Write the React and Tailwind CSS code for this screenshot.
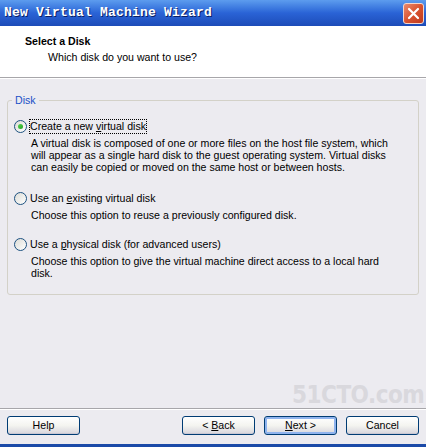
import React from "react";

const font = { fontFamily: '"Liberation Sans", Arial, sans-serif' };

const Radio = ({ checked }) => (
  <span className="relative inline-flex h-[13px] w-[13px] shrink-0 items-center justify-center rounded-full border border-[#1c5180] bg-gradient-to-br from-[#dcdcd6] to-white">
    {checked && (
      <span className="h-[5px] w-[5px] rounded-full bg-gradient-to-br from-[#55d551] to-[#21a121]" />
    )}
  </span>
);

const XpButton = ({ children, primary }) => (
  <button
    className={`flex h-[19px] w-[73px] items-center justify-center rounded-[3px] border border-[#003c74] bg-gradient-to-b from-white via-[#f4f4f0] to-[#d6d5dc] text-[10.6px] leading-none text-black ${
      primary ? "shadow-[inset_0_0_0_2px_#8fb3ee]" : "shadow-[inset_0_-1px_0_#c9c7d4]"
    }`}
  >
    <span className="whitespace-pre">{children}</span>
  </button>
);

const Option = ({ checked, focus, label, lines, className = "" }) => (
  <div className={className}>
    <div className="flex items-center gap-[3px]">
      <Radio checked={checked} />
      <span
        className={`text-[10.6px] leading-[13px] text-black ${
          focus ? "outline outline-1 outline-dotted outline-black" : ""
        }`}
      >
        {label}
      </span>
    </div>
    <div className="mt-[4px] pl-[17px] text-[10.6px] leading-[12px] text-black">
      {lines.map((l, i) => (
        <div key={i}>{l}</div>
      ))}
    </div>
  </div>
);

export default function App() {
  return (
    <div className="relative flex h-[447px] w-[426px] flex-col overflow-hidden bg-[#ecebf0]" style={font}>
      {/* title bar */}
      <div className="flex h-[26px] items-center justify-between bg-gradient-to-b from-[#5d9cee] via-[#2a63d6] to-[#1d4cb8] pl-[4px] pr-[2px]">
        <span
          className="text-[13px] font-bold tracking-[0.2px] text-white [text-shadow:1px_1px_0_#0a1f66]"
          style={{ fontFamily: '"Liberation Mono", "Courier New", monospace' }}
        >
          New Virtual Machine Wizard
        </span>
        <span className="flex h-[21px] w-[21px] items-center justify-center rounded-[3px] border border-[#f4d6cc] bg-gradient-to-br from-[#e98a6e] via-[#d9532f] to-[#c0391c]">
          <svg width="13" height="13" viewBox="0 0 13 13">
            <path d="M2 2 L11 11 M11 2 L2 11" stroke="white" strokeWidth="2.2" strokeLinecap="round" />
          </svg>
        </span>
      </div>

      {/* header */}
      <div className="h-[52px] border-b border-[#a7a6aa] bg-white pl-[25px] pt-[9px]">
        <div className="text-[10.6px] font-bold leading-[13px] text-black">Select a Disk</div>
        <div className="mt-[3px] pl-[23px] text-[10.6px] leading-[13px] text-black">
          Which disk do you want to use?
        </div>
      </div>
      <div className="h-px bg-white" />

      {/* body */}
      <div className="flex-1 px-[7px] pt-[21px]">
        <div className="relative rounded-[3px] border border-[#d3d1c8] px-[6px] pb-[15px] pt-[19px]">
          <span className="absolute left-[4px] top-[-7px] bg-[#ecebf0] px-[3px] text-[10.6px] leading-[13px] text-[#1a4fc7]">
            Disk
          </span>
          <Option
            checked
            focus
            label={
              <>
                Create a new <u>v</u>irtual disk
              </>
            }
            lines={[
              "A virtual disk is composed of one or more files on the host file system, which",
              "will appear as a single hard disk to the guest operating system. Virtual disks",
              "can easily be copied or moved on the same host or between hosts.",
            ]}
          />
          <Option
            className="mt-[19px]"
            label={
              <>
                Use an <u>e</u>xisting virtual disk
              </>
            }
            lines={["Choose this option to reuse a previously configured disk."]}
          />
          <Option
            className="mt-[17px]"
            label={
              <>
                Use a <u>p</u>hysical disk (for advanced users)
              </>
            }
            lines={[
              "Choose this option to give the virtual machine direct access to a local hard",
              "disk.",
            ]}
          />
        </div>
      </div>

      {/* watermark */}
      <div
        className="pointer-events-none absolute left-[292px] top-[383px] select-none text-[24px] font-bold leading-none tracking-[-0.5px] text-[#d9d8dd]"
        style={{ fontFamily: '"DejaVu Sans Condensed", "DejaVu Sans", sans-serif' }}
      >
        51CTO.com
      </div>

      {/* footer */}
      <div className="border-t border-[#a7a6aa]">
        <div className="h-px bg-white" />
        <div className="flex h-[34px] items-center px-[7px] pb-[3px]">
          <XpButton>Help</XpButton>
          <div className="ml-auto flex gap-[9px]">
            <XpButton>
              {"< "}
              <u>B</u>ack
            </XpButton>
            <XpButton primary>
              <u>N</u>ext {">"}
            </XpButton>
            <XpButton>Cancel</XpButton>
          </div>
        </div>
        <div className="h-[3px] bg-[#1b4aa8]" />
      </div>
    </div>
  );
}
